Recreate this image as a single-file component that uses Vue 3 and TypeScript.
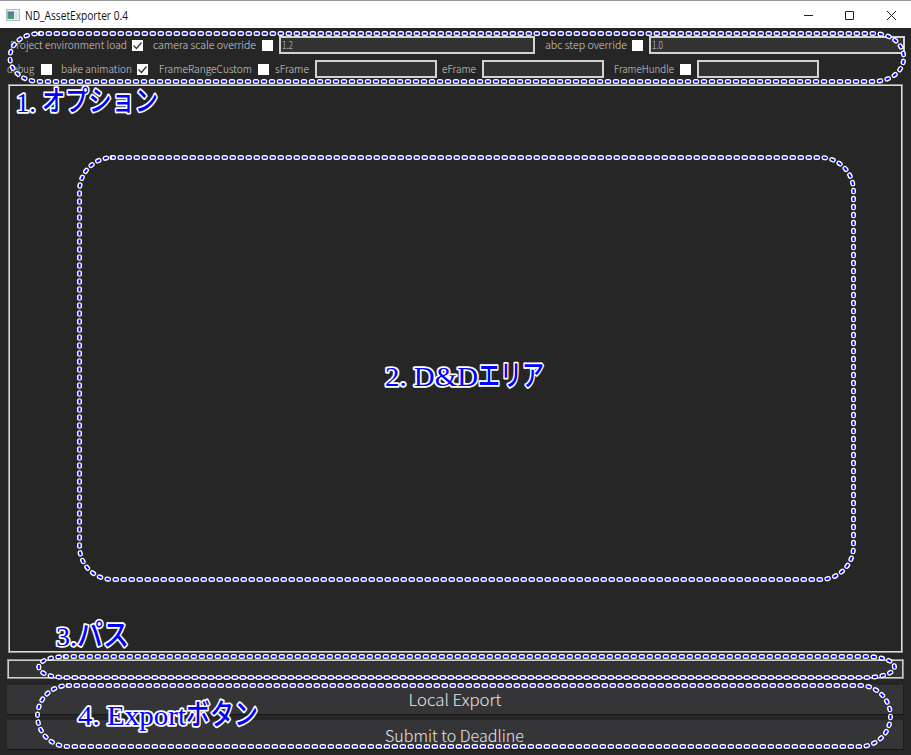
<script setup lang="ts">
interface Field {
  label: string
  pad: number
  width: number
  checkbox?: boolean
  checked?: boolean
  gap?: number
  input?: number
  value?: string
  inputGap?: number
}

interface Outline {
  d: string
}

interface Note {
  x: number
  y: number
  size: number
  text: string
  width: number
  kana?: boolean
}

const rows: Field[][] = [
  [
    { label: 'Project environment load', pad: 10, width: 117, checkbox: true, checked: true, gap: 5 },
    { label: 'camera scale override', pad: 10, width: 103, checkbox: true, gap: 6, input: 256, value: '1.2', inputGap: 6 },
    { label: 'abc step override', pad: 10, width: 82, checkbox: true, gap: 5, input: 256, value: '1.0', inputGap: 6 },
  ],
  [
    { label: 'debug', pad: 7, width: 27, checkbox: true, gap: 7 },
    { label: 'bake animation', pad: 9, width: 71, checkbox: true, checked: true, gap: 5 },
    { label: 'FrameRangeCustom', pad: 11, width: 93, checkbox: true, gap: 6 },
    { label: 'sFrame', pad: 6, width: 34, input: 122, inputGap: 6 },
    { label: 'eFrame', pad: 5, width: 34, input: 122, inputGap: 6 },
    { label: 'FrameHundle', pad: 10, width: 60, checkbox: true, gap: 6, input: 122, inputGap: 6 },
  ],
]

const outlines: Outline[] = [
  { d: 'M40 33.5H873C914 34 914 81 873 81.500H40C0 81 0 34 40 33.500Z' },
  { d: 'M112 157.500H821A33 33 0 0 1 853.500 190.500V546.500A33 33 0 0 1 821 579.500H112A33 33 0 0 1 79.500 546.500V190.500A33 33 0 0 1 112 157.500Z' },
  { d: 'M65 656.500H866C904 657 904 677 866 677.500H65C30 677 30 657 65 656.500Z' },
  { d: 'M68 685.500H860A30.500 30.500 0 0 1 860 746.500H68A30.500 30.500 0 0 1 68 685.500Z' },
]

const notes: Note[] = [
  { x: 16, y: 112, size: 28, text: '1.', width: 20 },
  { x: 42, y: 111, size: 28, text: 'オプション', width: 116, kana: true },
  { x: 385, y: 386, size: 28, text: '2. D&D', width: 93 },
  { x: 478, y: 386, size: 29, text: 'エリア', width: 66, kana: true },
  { x: 56, y: 646, size: 28, text: '3.', width: 21 },
  { x: 77, y: 645, size: 30, text: 'パス', width: 52, kana: true },
  { x: 78, y: 725, size: 28, text: '4. Export', width: 108 },
  { x: 186, y: 725, size: 29, text: 'ボタン', width: 72, kana: true },
]
</script>

<template>
  <div class="window">
    <header class="titlebar">
      <svg class="app-icon" width="14" height="12" viewBox="0 0 14 12">
        <defs>
          <linearGradient id="pane" x2="0" y2="1">
            <stop offset="0" stop-color="#4478a5" />
            <stop offset="1" stop-color="#4ca36c" />
          </linearGradient>
        </defs>
        <rect x=".5" y=".5" width="13" height="11" fill="#e9eef0" stroke="#b5bcc0" />
        <rect x="1.500" y="2.500" width="6.500" height="7.500" fill="url(#pane)" />
        <path d="M10 3v7" stroke="#c5d0d5" />
      </svg>
      <svg class="title" width="110" height="20"><text x="0" y="15" textLength="103" lengthAdjust="spacingAndGlyphs">ND_AssetExporter 0.4</text></svg>
      <svg class="controls" width="100" height="12" viewBox="0 0 100 12">
        <path d="M4 6.500h9M45.500 2.500h8v8h-8zM87 2l9 9M96 2l-9 9" />
      </svg>
    </header>

    <main class="body">
      <section class="options">
        <div v-for="(row, r) in rows" :key="r" class="row">
          <div v-for="field in row" :key="field.label" class="field" :style="{ paddingLeft: field.pad + 'px' }">
            <svg class="label" :width="field.width + 2" height="20">
              <text x="0" y="14" :textLength="field.width" lengthAdjust="spacingAndGlyphs">{{ field.label }}</text>
            </svg>
            <span v-if="field.checkbox" class="check" :style="{ marginLeft: field.gap + 'px' }">
              <svg v-if="field.checked" width="11" height="11" viewBox="0 0 11 11"><path d="M1.500 5.500l3 3 5-6" /></svg>
            </span>
            <div v-if="field.input" class="input" :style="{ width: field.input + 'px', marginLeft: field.inputGap + 'px' }">
              <svg v-if="field.value" width="20" height="20"><text x="1" y="14" textLength="11" lengthAdjust="spacingAndGlyphs">{{ field.value }}</text></svg>
            </div>
          </div>
        </div>
      </section>
      <section class="drop"></section>
      <div class="path"></div>
      <button class="action">
        <svg width="96" height="26"><text x="1.500" y="19" textLength="93" lengthAdjust="spacingAndGlyphs">Local Export</text></svg>
      </button>
      <button class="action">
        <svg width="142" height="26"><text x="1" y="20" textLength="139" lengthAdjust="spacingAndGlyphs">Submit to Deadline</text></svg>
      </button>
    </main>

    <svg class="notes" width="911" height="755" viewBox="0 0 911 755">
      <g v-for="(o, i) in outlines" :key="i">
        <path class="halo" :d="o.d" />
        <path class="dash" :d="o.d" />
      </g>
      <text
        v-for="n in notes"
        :key="n.text"
        :class="{ kana: n.kana }"
        :x="n.x"
        :y="n.y"
        :font-size="n.size"
        :textLength="n.width"
        lengthAdjust="spacingAndGlyphs"
      >{{ n.text }}</text>
    </svg>
  </div>
</template>

<style>
body {
  margin: 0;
  overflow: hidden;
}
</style>

<style scoped>
.window {
  position: relative;
  box-sizing: border-box;
  width: 911px;
  height: 755px;
  display: flex;
  flex-direction: column;
  background: #262626;
  font-family: "Noto Sans CJK JP", "Noto Sans", sans-serif;
}
svg {
  display: block;
  flex: none;
  overflow: visible;
}
.titlebar {
  box-sizing: border-box;
  height: 28px;
  display: flex;
  align-items: center;
  padding-left: 6px;
  background: #fff;
  border-top: 1px solid #989898;
}
.title {
  margin-left: 5px;
}
.title text {
  font: 12px "Open Sans", "Noto Sans", sans-serif;
  fill: #111;
}
.controls {
  margin-left: auto;
  margin-right: 11px;
}
.controls path {
  fill: none;
  stroke: #222;
}
.body {
  flex: 1;
  display: flex;
  flex-direction: column;
}
.options {
  height: 56px;
  padding-top: 5px;
  box-sizing: border-box;
}
.row {
  display: flex;
  height: 24px;
  align-items: center;
}
.field {
  display: flex;
  align-items: center;
}
.label {
  margin-right: -2px;
}
.label text {
  font-size: 11px;
  font-weight: 300;
  fill: #d2d2d2;
}
.check {
  width: 11px;
  height: 11px;
  background: #fff;
}
.check path {
  fill: none;
  stroke: #333;
  stroke-width: 1.300;
}
.input {
  display: flex;
  align-items: center;
  box-sizing: border-box;
  height: 18px;
  border: 2px solid #d2d2d2;
  background: #323232;
}
.input text {
  font-size: 11px;
  font-weight: 300;
  fill: #ccc;
}
.drop {
  box-sizing: border-box;
  height: 569px;
  margin: 0 8px;
  border: 1px solid #909090;
  box-shadow: inset 0 0 0 1px #dedede;
  background: #262626;
}
.path {
  box-sizing: border-box;
  height: 20px;
  margin: 6px 7px 6px;
  border: 1px solid #8e8e8e;
  box-shadow: inset 0 0 0 1px #cfcfcf;
  background: #323232;
}
.action {
  display: flex;
  align-items: center;
  justify-content: center;
  box-sizing: border-box;
  height: 30px;
  margin: 0 7px 5px;
  padding: 0;
  border: 0;
  border-bottom: 1px solid #171717;
  border-right: 1px solid #1c1c1c;
  background: #353537;
  font-family: inherit;
}
.action text {
  font-size: 16px;
  font-weight: 300;
  fill: #e8e8e8;
}
.notes {
  position: absolute;
  inset: 0;
  pointer-events: none;
}
.halo {
  fill: none;
  stroke: #fff;
  stroke-width: 5;
  stroke-linecap: round;
  stroke-dasharray: 1.600 6.400;
}
.dash {
  fill: none;
  stroke: #00f;
  stroke-width: 2;
  stroke-dasharray: 3.800 4.200;
  stroke-dashoffset: 1.100;
}
.notes text {
  font-family: "Liberation Serif", serif;
  fill: #00f;
  stroke: #fff;
  stroke-width: 3.500;
  stroke-linejoin: round;
  paint-order: stroke;
}
.notes text.kana {
  font-family: "Noto Sans CJK JP", sans-serif;
  font-weight: 500;
}
</style>
